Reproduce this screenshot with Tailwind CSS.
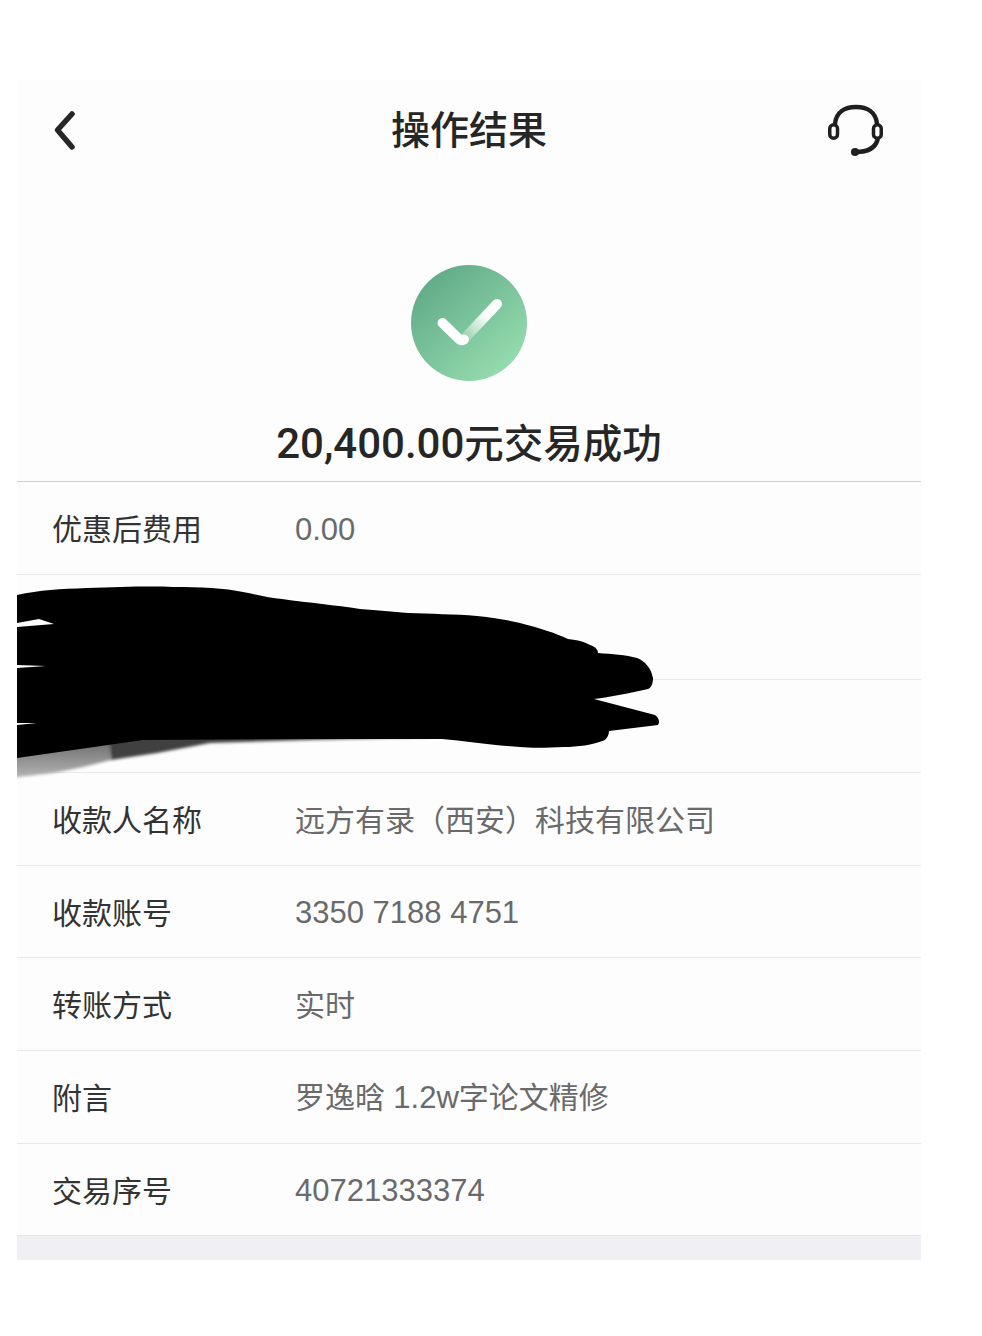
<!DOCTYPE html>
<html lang="zh-CN">
<head>
  <meta charset="UTF-8">
  <title>操作结果</title>
  <script src="https://cdn.jsdelivr.net/npm/@tailwindcss/browser@4"></script>
</head>
<body class="relative bg-white h-[1336px] overflow-hidden font-['Liberation_Sans','Noto_Sans_CJK_SC',sans-serif]">

  <div class="ml-[17px] pt-[80px] w-[904px]">
    <div class="bg-[#fdfdfd]">

      <!-- header -->
      <div class="h-[100px] px-[35px] flex items-center justify-between">
        <svg class="w-[60px] h-[60px]" viewBox="0 0 60 60" fill="none" stroke="#262626" stroke-width="5.500" stroke-linecap="round" stroke-linejoin="round">
          <path d="M20 14 L5.500 30 L20 47"/>
        </svg>
        <h1 class="pt-[2px] text-[39px] leading-[48px] font-medium text-[#262626]">操作结果</h1>
        <svg class="w-[60px] h-[60px]" viewBox="0 0 60 60" fill="none" stroke="#1f1f1f" stroke-width="4.500" stroke-linecap="round">
          <path d="M9 24 C10 12 19 7 30 7 C41 7 50 12 51 24"/>
          <rect x="3.750" y="24.750" width="7.750" height="13.500" rx="3.800" stroke-width="3.500"/>
          <rect x="47.500" y="24.750" width="7.750" height="13.500" rx="3.800" stroke-width="3.500"/>
          <path d="M51.500 40 C49 48 41 52 30 52"/>
          <circle cx="29" cy="52" r="4" fill="#1f1f1f" stroke="none"/>
        </svg>
      </div>

      <!-- status -->
      <div class="pt-[84px] flex justify-center">
        <svg class="w-[118px] h-[118px]" viewBox="0 0 118 118" fill="none">
          <defs>
            <linearGradient id="disc" x1="0.150" y1="0.100" x2="0.850" y2="0.900">
              <stop offset="0" stop-color="#62ab89"/>
              <stop offset="1" stop-color="#95dcae"/>
            </linearGradient>
            <linearGradient id="tick" gradientUnits="userSpaceOnUse" x1="54" y1="76" x2="87" y2="40">
              <stop offset="0" stop-color="#ffffff" stop-opacity="0.150"/>
              <stop offset="0.650" stop-color="#ffffff" stop-opacity="0.950"/>
              <stop offset="1" stop-color="#ffffff"/>
            </linearGradient>
          </defs>
          <circle cx="59" cy="59" r="58" fill="url(#disc)"/>
          <path d="M54 75 L87 40" stroke="url(#tick)" stroke-width="10" stroke-linecap="round"/>
          <path d="M32.500 59 L49 75 Q51 77 54 75.500" stroke="#ffffff" stroke-width="10" stroke-linecap="round" stroke-linejoin="round"/>
        </svg>
      </div>
      <div class="h-[100px] pt-[38px] border-b border-[#cfcfcf] text-center text-[39.500px] leading-[48px] font-medium text-[#262626]"><span class="text-[42px] font-['Roboto']">20,400.00</span>元交易成功</div>

      <!-- detail rows -->
      <div class="h-[93px] pt-[3px] px-[35px] flex items-center border-b border-[#e8e8e8] text-[30px]">
        <span class="w-[243px] text-[#333333]">优惠后费用</span>
        <span class="mt-[2px] text-[31px] text-[#6a6a6a]">0.00</span>
      </div>
      <div class="h-[105px] border-b border-[#e8e8e8]"></div>
      <div class="h-[93px] border-b border-[#e8e8e8]"></div>
      <div class="h-[93px] pt-[3px] px-[35px] flex items-center border-b border-[#e8e8e8] text-[30px]">
        <span class="w-[243px] text-[#333333]">收款人名称</span>
        <span class="text-[#6a6a6a]">远方有录（西安）科技有限公司</span>
      </div>
      <div class="h-[92px] pt-[3px] px-[35px] flex items-center border-b border-[#e8e8e8] text-[30px]">
        <span class="w-[243px] text-[#333333]">收款账号</span>
        <span class="text-[31px] text-[#6a6a6a]">3350 7188 4751</span>
      </div>
      <div class="h-[93px] pt-[3px] px-[35px] flex items-center border-b border-[#e8e8e8] text-[30px]">
        <span class="w-[243px] text-[#333333]">转账方式</span>
        <span class="text-[#6a6a6a]">实时</span>
      </div>
      <div class="h-[93px] pt-[3px] px-[35px] flex items-center border-b border-[#e8e8e8] text-[30px]">
        <span class="w-[243px] text-[#333333]">附言</span>
        <span class="text-[#6a6a6a]">罗逸晗 <span class="text-[31px]">1.2w</span>字论文精修</span>
      </div>
      <div class="h-[92px] pt-[3px] px-[35px] flex items-center border-b border-[#e8e8e8] text-[30px]">
        <span class="w-[243px] text-[#333333]">交易序号</span>
        <span class="text-[31px] text-[#6a6a6a]">40721333374</span>
      </div>
      <div class="h-[24px] bg-[#efeff4]"></div>
    </div>
  </div>

  <!-- hand drawn redaction over the two hidden rows -->
  <svg class="absolute top-0 left-0 w-[982px] h-[1336px] pointer-events-none" viewBox="0 0 982 1336">
    <defs>
      <filter id="soft" x="-10%" y="-30%" width="120%" height="160%"><feGaussianBlur stdDeviation="1.500"/></filter>
      <linearGradient id="smear" x1="0" y1="0" x2="0" y2="1">
        <stop offset="0" stop-color="#6a6a6a"/>
        <stop offset="1" stop-color="#b5b5b5"/>
      </linearGradient>
      <clipPath id="panel"><rect x="17" y="700" width="904" height="100"/></clipPath>
    </defs>
    <g clip-path="url(#panel)">
      <path filter="url(#soft)" fill="url(#smear)" d="M10 750 L111 740 L111 760 L83 767 L53 773 L10 778 Z"/>
      <path filter="url(#soft)" fill="#404040" d="M109 742 L140 734 L430 734 L430 737 L310 740 L210 743 L157 753 L111 760 Z"/>
    </g>
    <path fill="#000000" d="M17 595 C40 590 60 589 87 588 C120 587 150 586 173 587 C200 587 225 588 243 592 C258 595 270 598 282 599 C310 603 335 605 360 609 C378 610 392 612 408 613 C430 614 455 614 477 616 C495 618 508 620 520 623 C540 628 555 633 568 639 C578 640 585 642 590 645 C596 647 598 650 598 653 C612 654 626 655 637 658 C645 661 651 668 653 678 C653 684 651 688 648 689 C630 693 610 697 594 699 L655 715 C659 718 660 722 658 725 L609 731 C609 735 607 738 605 740 C592 745 578 747 564 747 C545 748 530 748 520 747 C490 745 465 741 442 739 L304 739 L143 740 L17 758 L17 725 L37 723 L17 723 L17 668 L46 666 L17 665 L17 627 L54 624 L39 619 L17 623 Z"/>
  </svg>

</body>
</html>
